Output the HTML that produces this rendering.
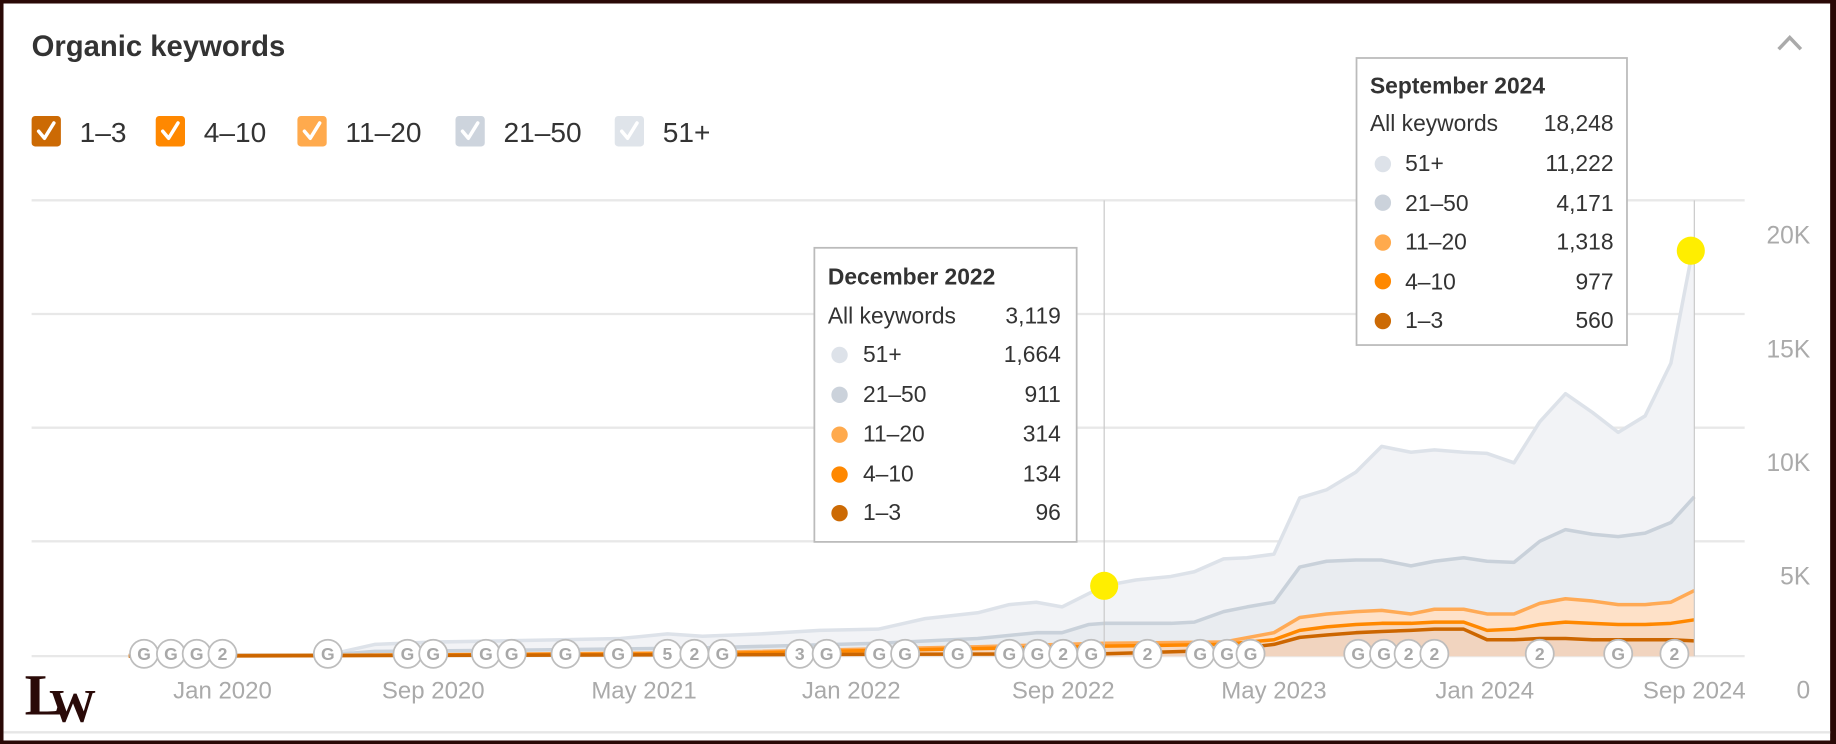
<!DOCTYPE html>
<html><head><meta charset="utf-8"><style>
html,body{margin:0;padding:0;background:#fff;width:1836px;height:744px;overflow:hidden}
svg{display:block}
text{font-family:"Liberation Sans",Arial,sans-serif}
</style></head><body>
<svg width="1836" height="744" viewBox="0 0 1568 635" preserveAspectRatio="none" xmlns="http://www.w3.org/2000/svg">
<rect x="0" y="0" width="1568" height="635" fill="#2a0906"/>
<rect x="3" y="3" width="1560" height="629" fill="#fff"/>
<line x1="3" y1="625" x2="1563" y2="625" stroke="#e6e6e6" stroke-width="2"/>

<text x="27" y="48" font-size="25" font-weight="bold" fill="#333">Organic keywords</text>
<polyline points="1519,42 1528.5,32 1538,42" fill="none" stroke="#aaa" stroke-width="3"/>

<!-- legend -->
<g font-size="24" fill="#333">
<rect x="27" y="99" width="25" height="26" rx="3" fill="#cc6a04"/>
<rect x="133" y="99" width="25" height="26" rx="3" fill="#ff8800"/>
<rect x="254" y="99" width="25" height="26" rx="3" fill="#ffaa4d"/>
<rect x="389" y="99" width="25" height="26" rx="3" fill="#cdd4dd"/>
<rect x="525" y="99" width="25" height="26" rx="3" fill="#dfe4ea"/>
<g fill="none" stroke="#fff" stroke-width="3" stroke-linecap="round" stroke-linejoin="round">
<polyline points="33,112 38,118 46,105"/><polyline points="139,112 144,118 152,105"/>
<polyline points="260,112 265,118 273,105"/><polyline points="395,112 400,118 408,105"/>
<polyline points="531,112 536,118 544,105"/></g>
<text x="68" y="121">1–3</text><text x="174" y="121">4–10</text><text x="295" y="121">11–20</text>
<text x="430" y="121">21–50</text><text x="566" y="121">51+</text>
</g>

<!-- grid -->
<g stroke="#e8e8e8" stroke-width="2">
<line x1="27" y1="171" x2="1490" y2="171"/><line x1="27" y1="268" x2="1490" y2="268"/>
<line x1="27" y1="365" x2="1490" y2="365"/><line x1="27" y1="462" x2="1490" y2="462"/>
<line x1="27" y1="560" x2="1490" y2="560"/></g>
<g font-size="21" fill="#aaa" text-anchor="end">
<text x="1546" y="208">20K</text><text x="1546" y="305">15K</text><text x="1546" y="402">10K</text>
<text x="1546" y="499">5K</text><text x="1546" y="596">0</text></g>
<g font-size="20.5" fill="#aaa" text-anchor="middle">
<text x="190" y="596">Jan 2020</text><text x="370" y="596">Sep 2020</text><text x="550" y="596">May 2021</text>
<text x="727" y="596">Jan 2022</text><text x="908" y="596">Sep 2022</text><text x="1088" y="596">May 2023</text>
<text x="1268" y="596">Jan 2024</text><text x="1447" y="596">Sep 2024</text></g>

<!-- areas -->
<polygon fill="#f2f3f6" points="110,559 280,559 320,550 370,548 430,547 480,546 530,545 570,541 600,543 650,541 700,538 750,537 790,528 835,523 862,516 885,514 907,518 943,500 970,495 1000,492 1020,488 1045,477 1065,476 1088,473 1110,425 1133,418 1158,403 1180,381 1205,386 1225,384 1250,386 1270,387 1293,395 1315,360 1337,336 1360,352 1382,369 1405,355 1427,310 1447,206 1447,560 110,560"/>
<polygon fill="#e9ecf0" points="110,559 280,559 320,556 430,555 600,553 750,549 835,545 885,540 907,540 930,533 943,532 1000,532 1020,531 1045,522 1065,518 1088,514 1110,484 1133,479 1158,478 1180,478 1205,483 1225,479 1250,476 1270,479 1293,480 1315,462 1337,452 1360,456 1382,458 1405,455 1427,446 1447,424 1447,560 110,560"/>
<polygon fill="#fee1c8" points="110,559.5 280,559.5 600,557 835,552 943,549 1045,548 1088,540 1110,527 1133,524 1158,522 1180,521 1205,524 1225,520 1250,520 1270,524 1293,524 1315,515 1337,511 1360,513 1382,516 1405,516 1427,514 1447,504 1447,560 110,560"/>
<polygon fill="#f8d8bd" points="110,560 600,558 943,551.5 1045,550 1088,546 1110,538 1133,535 1158,533 1180,532 1205,532 1225,531 1250,531 1270,538 1293,537 1315,533 1337,531 1360,532 1382,533 1405,533 1427,532 1447,529 1447,560 110,560"/>
<polygon fill="#f1d4bf" points="110,560 943,558 1045,555 1088,550 1110,544 1133,542 1158,540 1180,539 1205,538 1225,537 1250,537 1270,546 1293,546 1315,545 1337,545 1360,546 1382,546 1405,546 1427,546 1447,547 1447,560 110,560"/>

<g fill="none" stroke-width="3" stroke-linejoin="round">
<polyline stroke="#dde2e9" points="110,559 280,559 320,550 370,548 430,547 480,546 530,545 570,541 600,543 650,541 700,538 750,537 790,528 835,523 862,516 885,514 907,518 943,500 970,495 1000,492 1020,488 1045,477 1065,476 1088,473 1110,425 1133,418 1158,403 1180,381 1205,386 1225,384 1250,386 1270,387 1293,395 1315,360 1337,336 1360,352 1382,369 1405,355 1427,310 1447,206"/>
<polyline stroke="#c9d1da" points="110,559 280,559 320,556 430,555 600,553 750,549 835,545 885,540 907,540 930,533 943,532 1000,532 1020,531 1045,522 1065,518 1088,514 1110,484 1133,479 1158,478 1180,478 1205,483 1225,479 1250,476 1270,479 1293,480 1315,462 1337,452 1360,456 1382,458 1405,455 1427,446 1447,424"/>
<polyline stroke="#ffaa55" points="110,559.5 280,559.5 600,557 835,552 943,549 1045,548 1088,540 1110,527 1133,524 1158,522 1180,521 1205,524 1225,520 1250,520 1270,524 1293,524 1315,515 1337,511 1360,513 1382,516 1405,516 1427,514 1447,504"/>
<polyline stroke="#ff8800" points="110,560 600,558 943,551.5 1045,550 1088,546 1110,538 1133,535 1158,533 1180,532 1205,532 1225,531 1250,531 1270,538 1293,537 1315,533 1337,531 1360,532 1382,533 1405,533 1427,532 1447,529"/>
<polyline stroke="#cc6600" points="110,560 943,558 1045,555 1088,550 1110,544 1133,542 1158,540 1180,539 1205,538 1225,537 1250,537 1270,546 1293,546 1315,545 1337,545 1360,546 1382,546 1405,546 1427,546 1447,547"/>
</g>

<line x1="943" y1="171" x2="943" y2="560" stroke="#c8c8c8" stroke-width="1"/>
<line x1="1447" y1="171" x2="1447" y2="560" stroke="#c8c8c8" stroke-width="1"/>

<!-- annotations -->
<g font-size="15" font-weight="bold" fill="#a8a8a8" text-anchor="middle">
<g stroke="#bdbdbd" stroke-width="1.5" fill="#fff">
<circle cx="123" cy="558" r="12"/><circle cx="146" cy="558" r="12"/><circle cx="168" cy="558" r="12"/><circle cx="190" cy="558" r="12"/>
<circle cx="280" cy="558" r="12"/><circle cx="348" cy="558" r="12"/><circle cx="370" cy="558" r="12"/>
<circle cx="415" cy="558" r="12"/><circle cx="437" cy="558" r="12"/><circle cx="483" cy="558" r="12"/>
<circle cx="528" cy="558" r="12"/><circle cx="570" cy="558" r="12"/><circle cx="593" cy="558" r="12"/><circle cx="617" cy="558" r="12"/>
<circle cx="683" cy="558" r="12"/><circle cx="706" cy="558" r="12"/><circle cx="751" cy="558" r="12"/><circle cx="773" cy="558" r="12"/>
<circle cx="818" cy="558" r="12"/><circle cx="862" cy="558" r="12"/><circle cx="886" cy="558" r="12"/><circle cx="908" cy="558" r="12"/><circle cx="932" cy="558" r="12"/>
<circle cx="980" cy="558" r="12"/><circle cx="1025" cy="558" r="12"/><circle cx="1048" cy="558" r="12"/><circle cx="1068" cy="558" r="12"/>
<circle cx="1160" cy="558" r="12"/><circle cx="1182" cy="558" r="12"/><circle cx="1203" cy="558" r="12"/><circle cx="1225" cy="558" r="12"/>
<circle cx="1315" cy="558" r="12"/><circle cx="1382" cy="558" r="12"/><circle cx="1430" cy="558" r="12"/>
</g>
<text x="123" y="563.5">G</text><text x="146" y="563.5">G</text><text x="168" y="563.5">G</text><text x="190" y="563.5">2</text>
<text x="280" y="563.5">G</text><text x="348" y="563.5">G</text><text x="370" y="563.5">G</text>
<text x="415" y="563.5">G</text><text x="437" y="563.5">G</text><text x="483" y="563.5">G</text>
<text x="528" y="563.5">G</text><text x="570" y="563.5">5</text><text x="593" y="563.5">2</text><text x="617" y="563.5">G</text>
<text x="683" y="563.5">3</text><text x="706" y="563.5">G</text><text x="751" y="563.5">G</text><text x="773" y="563.5">G</text>
<text x="818" y="563.5">G</text><text x="862" y="563.5">G</text><text x="886" y="563.5">G</text><text x="908" y="563.5">2</text><text x="932" y="563.5">G</text>
<text x="980" y="563.5">2</text><text x="1025" y="563.5">G</text><text x="1048" y="563.5">G</text><text x="1068" y="563.5">G</text>
<text x="1160" y="563.5">G</text><text x="1182" y="563.5">G</text><text x="1203" y="563.5">2</text><text x="1225" y="563.5">2</text>
<text x="1315" y="563.5">2</text><text x="1382" y="563.5">G</text><text x="1430" y="563.5">2</text>
</g>

<circle cx="943" cy="500" r="12" fill="#ffee00"/>
<circle cx="1444" cy="214" r="12" fill="#ffee00"/>

<!-- tooltip 1 -->
<rect x="695.5" y="211.5" width="224" height="251" fill="#fff" stroke="#bbb" stroke-width="1.5"/>
<g font-size="19.5" fill="#333">
<text x="707" y="243" font-weight="bold">December 2022</text>
<text x="707" y="276">All keywords</text>
<text x="737" y="309">51+</text><text x="737" y="343">21–50</text><text x="737" y="377">11–20</text>
<text x="737" y="411">4–10</text><text x="737" y="444">1–3</text>
<g text-anchor="end"><text x="906" y="276">3,119</text><text x="906" y="309">1,664</text><text x="906" y="343">911</text>
<text x="906" y="377">314</text><text x="906" y="411">134</text><text x="906" y="444">96</text></g>
</g>
<circle cx="717" cy="303" r="7" fill="#dde2e9"/><circle cx="717" cy="337" r="7" fill="#cbd2db"/>
<circle cx="717" cy="371" r="7" fill="#ffaa4d"/><circle cx="717" cy="405" r="7" fill="#ff8800"/>
<circle cx="717" cy="438" r="7" fill="#cc6a04"/>

<!-- tooltip 2 -->
<rect x="1158.5" y="49.5" width="231" height="245" fill="#fff" stroke="#bbb" stroke-width="1.5"/>
<g font-size="19.5" fill="#333">
<text x="1170" y="80" font-weight="bold">September 2024</text>
<text x="1170" y="112">All keywords</text>
<text x="1200" y="146">51+</text><text x="1200" y="180">21–50</text><text x="1200" y="213">11–20</text>
<text x="1200" y="247">4–10</text><text x="1200" y="280">1–3</text>
<g text-anchor="end"><text x="1378" y="112">18,248</text><text x="1378" y="146">11,222</text><text x="1378" y="180">4,171</text>
<text x="1378" y="213">1,318</text><text x="1378" y="247">977</text><text x="1378" y="280">560</text></g>
</g>
<circle cx="1181" cy="140" r="7" fill="#dde2e9"/><circle cx="1181" cy="173" r="7" fill="#cbd2db"/>
<circle cx="1181" cy="207" r="7" fill="#ffaa4d"/><circle cx="1181" cy="240" r="7" fill="#ff8800"/>
<circle cx="1181" cy="274" r="7" fill="#cc6a04"/>

<!-- logo -->
<g font-weight="bold" fill="#2a0a08">
<text x="21" y="610" font-size="50" style="font-family:'Liberation Serif',serif">L</text>
<text x="42" y="616" font-size="40" style="font-family:'Liberation Serif',serif">W</text>
</g>
</svg>
</body></html>
